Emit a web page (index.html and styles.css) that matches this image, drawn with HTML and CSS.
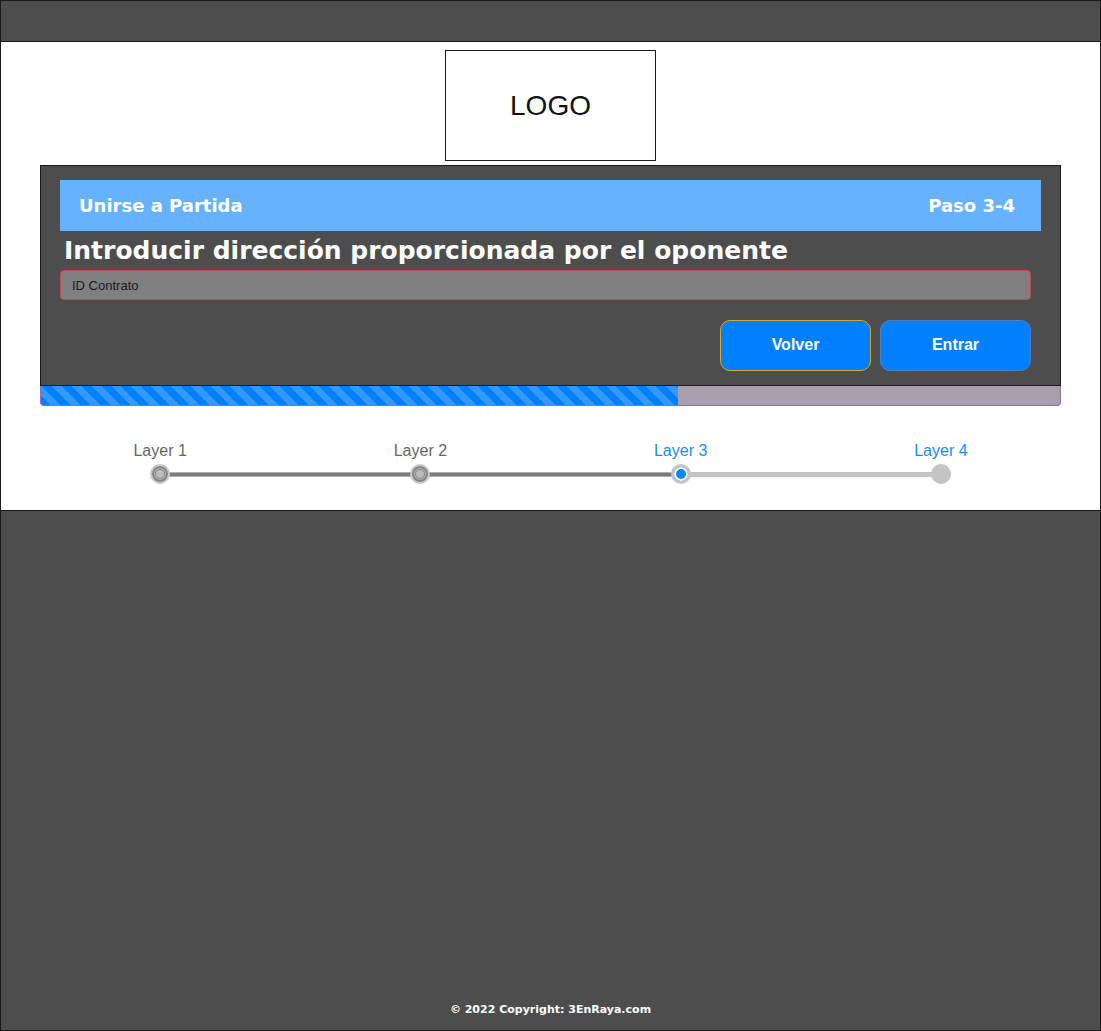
FILE: index.html
```html
<!DOCTYPE html>
<html lang="es">
<head>
    <meta charset="UTF-8">
    <meta name="viewport" content="width=device-width, initial-scale=1.0">
    <title>3EnRaya - Unirse a Partida</title>
    <link rel="stylesheet" href="styles.css">
</head>
<body>
    <div class="page">
        <!-- Top bar -->
        <div class="topbar"></div>

        <div class="main">
            <div class="logo">LOGO</div>

            <div class="card">
                <div class="card-header">
                    <span>Unirse a Partida</span>
                    <span>Paso 3-4</span>
                </div>
                <h1>Introducir dirección proporcionada por el oponente</h1>
                <input type="text" class="field" placeholder="ID Contrato">
                <div class="actions">
                    <button class="btn btn-back">Volver</button>
                    <button class="btn btn-enter">Entrar</button>
                </div>
            </div>

            <div class="progress">
                <div class="progress-bar" style="width: 62.5%"></div>
            </div>

            <div class="steps">
                <div class="step done">
                    <div class="step-label">Layer 1</div>
                    <div class="dot"></div>
                </div>
                <div class="step done">
                    <div class="step-label">Layer 2</div>
                    <div class="dot"></div>
                </div>
                <div class="step active">
                    <div class="step-label">Layer 3</div>
                    <div class="dot"></div>
                </div>
                <div class="step todo">
                    <div class="step-label">Layer 4</div>
                    <div class="dot"></div>
                </div>
            </div>
        </div>

        <div class="footer">© 2022 Copyright: 3EnRaya.com</div>
    </div>
</body>
</html>
```

FILE: styles.css
```css
body {
    margin: 0;
    padding: 0;
    background-color: #4d4d4d;
    font-family: "Liberation Sans", Arial, sans-serif;
}

.page {
    height: 1031px;
    box-sizing: border-box;
    border: 1px solid #1a1a1a;
    display: flex;
    flex-direction: column;
}

.topbar {
    height: 40px;
    background-color: #4d4d4d;
    border-bottom: 1px solid #1a1a1a;
}

.main {
    background: white;
    border-bottom: 1px solid #1a1a1a;
    padding: 8px 39px 26px 39px;
    display: flex;
    flex-direction: column;
}

.logo {
    align-self: center;
    width: 209px;
    height: 109px;
    border: 1px solid #1a1a1a;
    display: flex;
    align-items: center;
    justify-content: center;
    font-size: 28px;
    color: #111;
    margin-bottom: 4px;
}

.card {
    background-color: #4d4d4d;
    border: 1px solid #1a1a1a;
    padding: 14px 19px 14px 19px;
    display: flex;
    flex-direction: column;
}

.card-header {
    background-color: #66b2ff;
    height: 51px;
    padding: 0 26px 0 19px;
    display: flex;
    align-items: center;
    justify-content: space-between;
    color: white;
    font-family: "DejaVu Sans", Verdana, sans-serif;
    font-weight: bold;
    font-size: 18px;
}

.card h1 {
    margin: 3px 0 3px 4px;
    color: white;
    font-family: "DejaVu Sans", Verdana, sans-serif;
    font-size: 25px;
    line-height: 33px;
}

.field {
    margin-right: 10px;
    height: 30px;
    box-sizing: border-box;
    border: 1px solid #c9484a;
    border-radius: 4px;
    background-color: #808080;
    padding: 0 11px;
    font-family: "Liberation Sans", Arial, sans-serif;
    font-size: 13px;
    color: #111;
}

.field::placeholder {
    color: #1a1a1a;
}

.actions {
    margin-top: 20px;
    margin-right: 10px;
    display: flex;
    justify-content: flex-end;
    gap: 9px;
}

.btn {
    width: 151px;
    height: 51px;
    border-radius: 10px;
    background-color: #0080ff;
    color: white;
    font-family: "Liberation Sans", Arial, sans-serif;
    font-size: 16px;
    font-weight: bold;
    padding-bottom: 3px;
    cursor: pointer;
}

.btn-back {
    border: 1px solid #d9a62e;
}

.btn-enter {
    border: 1px solid #4d7fbf;
}

.progress {
    height: 20px;
    box-sizing: border-box;
    background-color: #a79fab;
    border: 1px solid #9a6ba6;
    border-top: none;
    border-radius: 0 0 4px 4px;
    overflow: hidden;
}

.progress-bar {
    height: 100%;
    background: repeating-linear-gradient(45deg, #0080ff 0 7px, #3399ff 7px 14px);
}

.steps {
    margin: 35px -10px 0 -10px;
    display: grid;
    grid-template-columns: repeat(4, 1fr);
}

.step {
    position: relative;
    display: flex;
    flex-direction: column;
    align-items: center;
    font-size: 16px;
}

.step-label {
    line-height: 20px;
    margin-bottom: 3px;
    color: #666;
}

.step.active .step-label,
.step.todo .step-label {
    color: #1a8cff;
}

/* connector to the next step */
.step::after {
    content: "";
    position: absolute;
    top: 31px;
    left: 50%;
    width: 100%;
    height: 5px;
    background-color: #c4c4c4;
}

.step.done::after {
    height: 3px;
    background-color: #7a7a7a;
    border-top: 1px solid #b0b0b0;
    border-bottom: 1px solid #b0b0b0;
    box-sizing: content-box;
}

.step:last-child::after {
    display: none;
}

.dot {
    position: relative;
    z-index: 1;
    width: 20px;
    height: 20px;
    border-radius: 50%;
    box-sizing: border-box;
    background-color: #c4c4c4;
}

.step.done .dot {
    border: 2px solid #c8c8c8;
    background-color: #b0b0b0;
    box-shadow: inset 0 0 0 2px #858585;
}

.step.done .dot::after {
    content: "";
    position: absolute;
    left: 3px;
    top: 3px;
    width: 10px;
    height: 10px;
    border-radius: 50%;
    border: 1px solid #8a8a8a;
    background-color: #bcbcbc;
    box-sizing: border-box;
}

.step.active .dot {
    background-color: #0a84ff;
    border: 3px solid #c4c4c4;
    box-shadow: inset 0 0 0 2px white;
}

.footer {
    margin-top: auto;
    padding-bottom: 14px;
    text-align: center;
    color: white;
    font-family: "DejaVu Sans", Verdana, sans-serif;
    font-weight: bold;
    font-size: 11px;
}
```
